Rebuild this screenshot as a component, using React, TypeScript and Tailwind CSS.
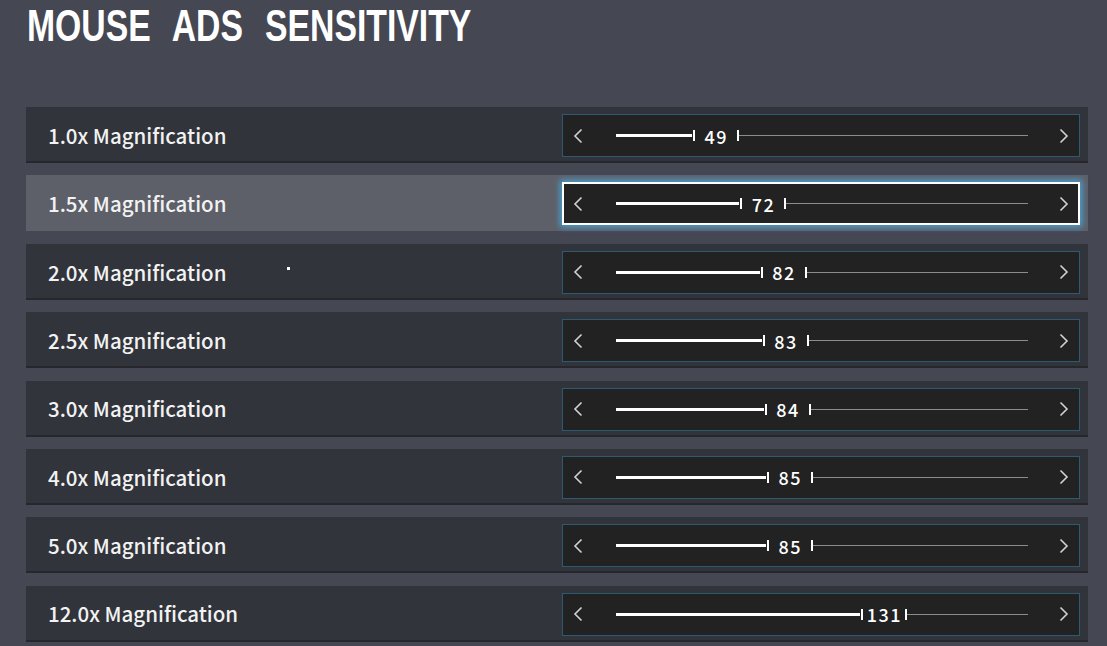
import React from "react";

const rows: { label: string; value: number; active?: boolean }[] = [
  { label: "1.0x Magnification", value: 49 },
  { label: "1.5x Magnification", value: 72, active: true },
  { label: "2.0x Magnification", value: 82 },
  { label: "2.5x Magnification", value: 83 },
  { label: "3.0x Magnification", value: 84 },
  { label: "4.0x Magnification", value: 85 },
  { label: "5.0x Magnification", value: 85 },
  { label: "12.0x Magnification", value: 131 },
];

const labelFont = { fontFamily: '"Noto Sans CJK JP", "Noto Sans", sans-serif' };

function Chevron({ dir }: { dir: "left" | "right" }) {
  return (
    <svg width="10" height="16" viewBox="0 0 10 16" className="shrink-0">
      <path
        d={dir === "left" ? "M8.5 1.5 L2 8 L8.5 14.5" : "M1.5 1.5 L8 8 L1.5 14.5"}
        fill="none"
        stroke="#d2d2d2"
        strokeWidth="1.6"
      />
    </svg>
  );
}

function Slider({ value, active }: { value: number; active?: boolean }) {
  const fill = Math.max(0, 2.05 * (value - 12));
  return (
    <div
      className={
        "mt-[7px] self-start w-[518px] h-[43px] bg-[#222222] flex items-center " +
        (active
          ? "border-2 border-white shadow-[0_0_6px_2px_rgba(70,170,225,0.9)]"
          : "border border-[#2b5a72]")
      }
    >
      <div className={active ? "ml-[9px]" : "ml-[10px]"}>
        <Chevron dir="left" />
      </div>
      <div className="ml-[33px] w-[412px] h-full flex items-center">
        <div className="h-[3px] bg-white shrink-0" style={{ width: fill }} />
        <div className="w-[47px] shrink-0 flex items-center justify-between pl-[1px]">
          <div className="w-[2px] h-[11px] bg-white" />
          <span
            className="text-[18px] leading-none text-white tracking-[1.5px] pl-[1px] font-medium"
            style={labelFont}
          >
            {value}
          </span>
          <div className="w-[2px] h-[11px] bg-white" />
        </div>
        <div className="flex-1 h-px bg-[#8c8c8c]" />
      </div>
      <div className="ml-[31px]">
        <Chevron dir="right" />
      </div>
    </div>
  );
}

export default function App() {
  return (
    <div className="relative w-[1107px] h-[646px] overflow-hidden bg-[#454753]">
      <div className="pl-[27px] pt-[3px] h-[47px]">
        <h1
          className="inline-block origin-left scale-x-[0.75] whitespace-nowrap text-[45px] leading-[46px] font-bold text-white"
          style={{
            fontFamily: '"Liberation Sans", Arial, sans-serif',
            wordSpacing: "17px",
          }}
        >
          MOUSE ADS SENSITIVITY
        </h1>
      </div>
      <div className="mt-[60px] ml-[26px] w-[1062px] flex flex-col gap-[12.4px]">
        {rows.map((r) => (
          <div
            key={r.label}
            className={
              "h-[56px] shrink-0 flex justify-between pl-[22px] pr-[8px] border-b-2 " +
              (r.active ? "bg-[#5d6069] border-[#5d6069]" : "bg-[#31343b] border-[#25272c]")
            }
          >
            <div
              className="self-center mt-[2px] text-[20.5px] leading-none font-medium text-[#f2f2f2] whitespace-nowrap"
              style={labelFont}
            >
              {r.label}
            </div>
            <Slider value={r.value} active={r.active} />
          </div>
        ))}
      </div>
      <div className="absolute left-[287px] top-[267px] w-[3px] h-[3px] bg-white" />
    </div>
  );
}
